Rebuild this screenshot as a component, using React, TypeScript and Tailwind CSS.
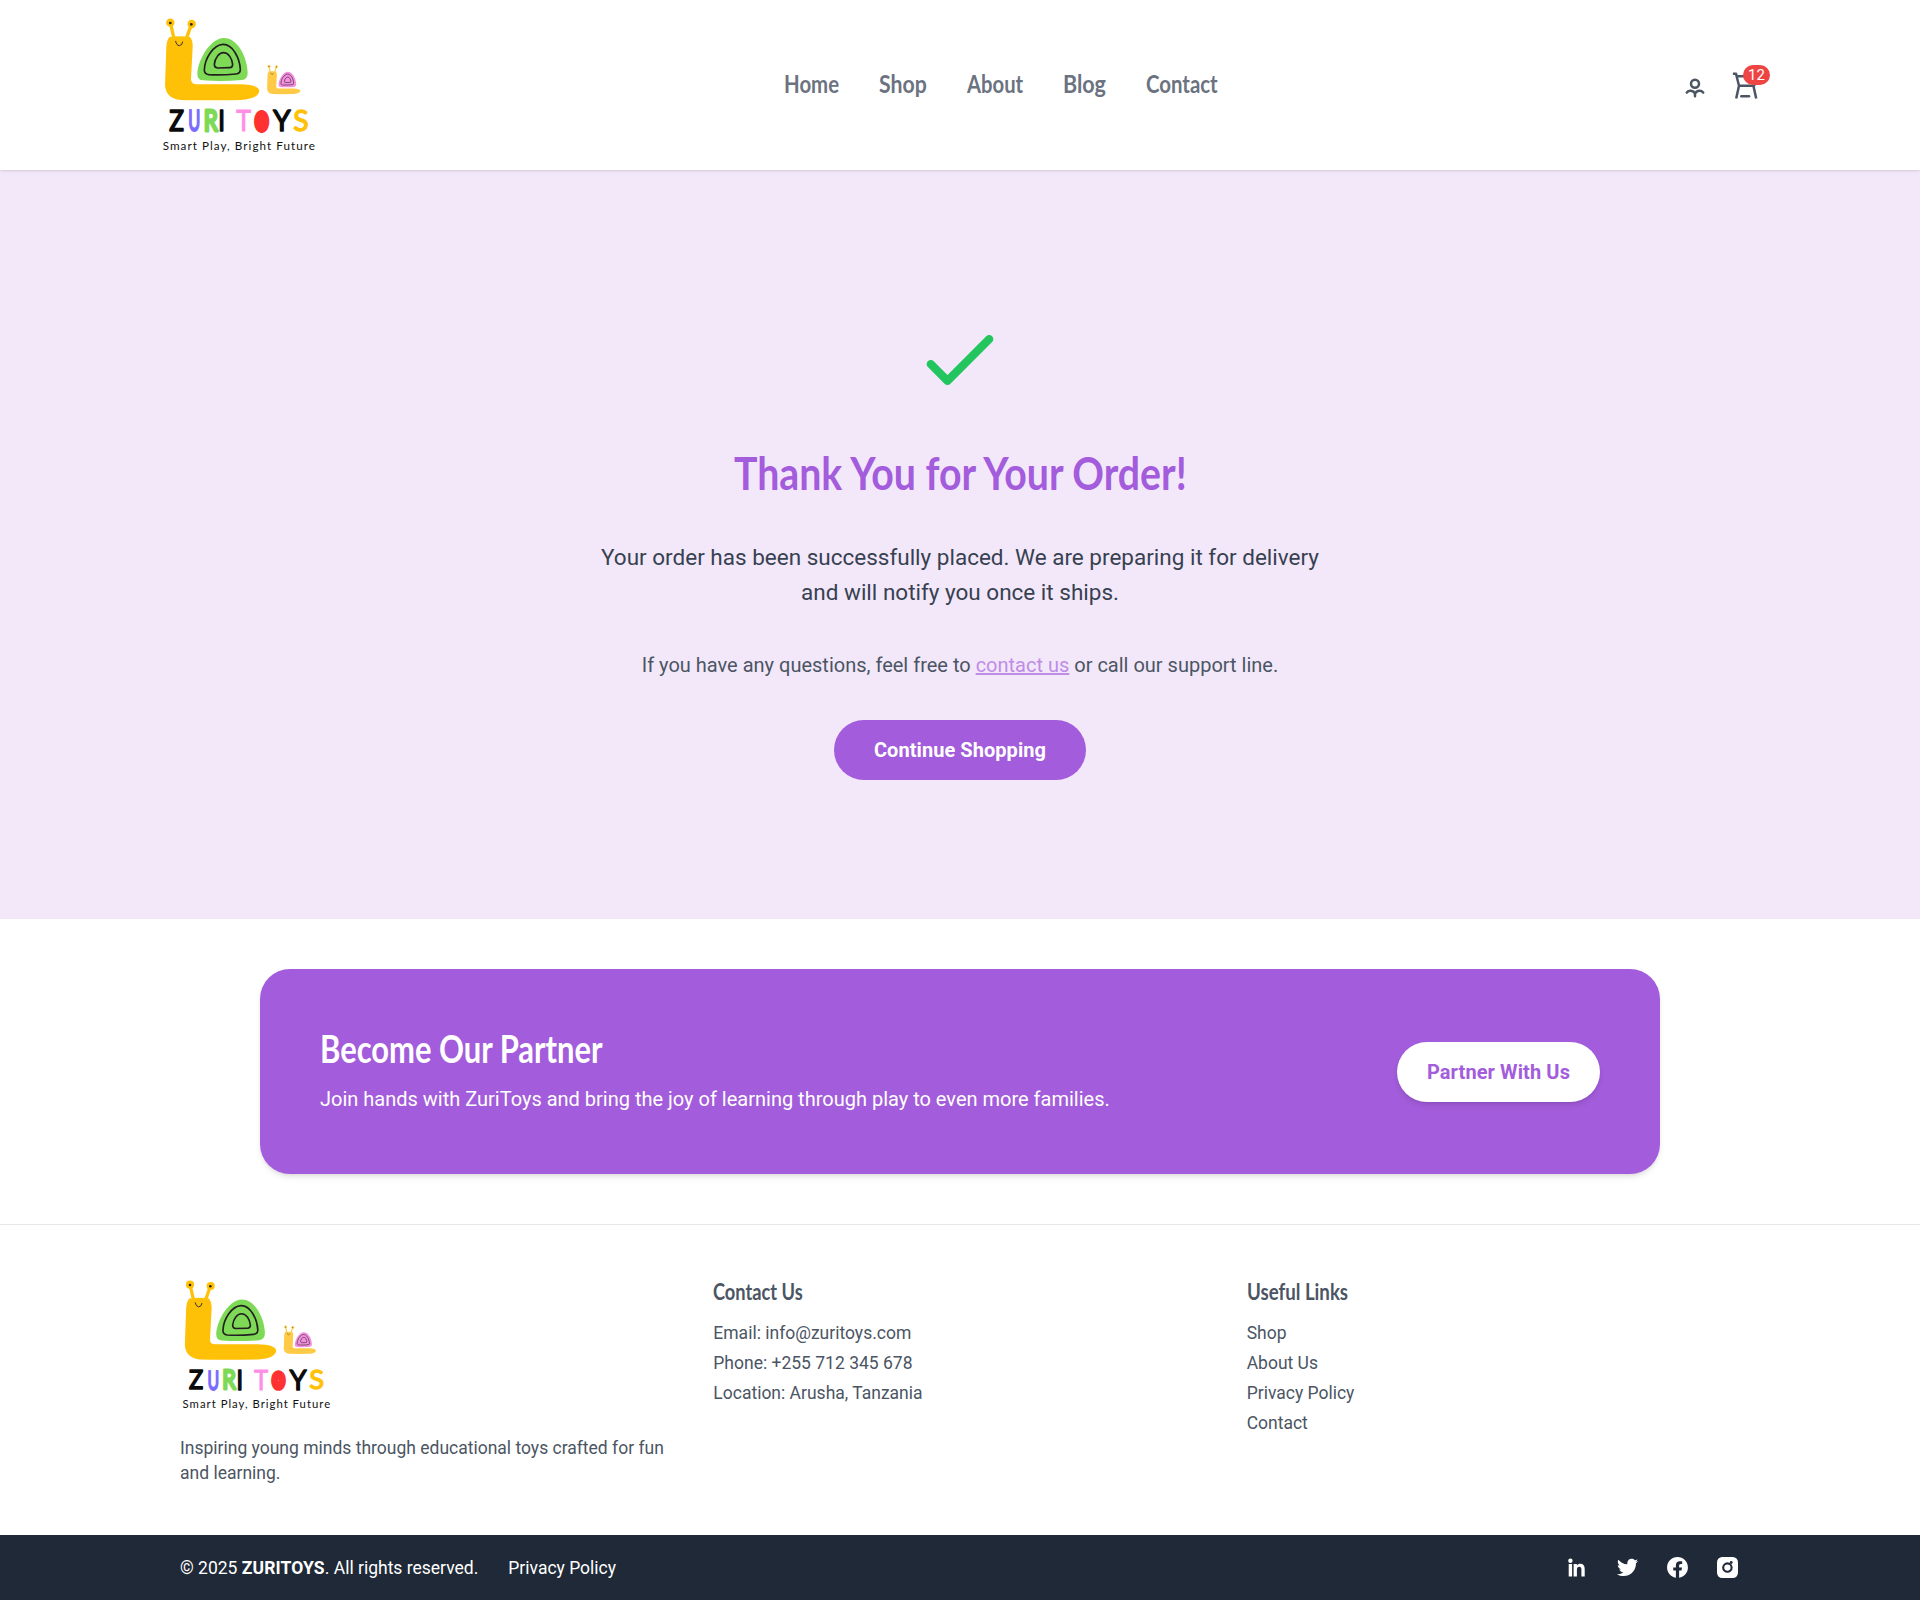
import type { ReactNode } from 'react';
import { RiFacebookCircleFill, RiTwitterFill } from 'react-icons/ri';

function Snail({ body, shell, line }: { body: string; shell: string; line: number }) {
  return (
    <g>
      <g fill="none" stroke={body} strokeWidth="10" strokeLinecap="round">
        <path d="M62 56L72 100" />
        <path d="M123 60L109 100" />
      </g>
      <circle cx="61" cy="52" r="12.5" fill={body} />
      <circle cx="125" cy="56" r="12.5" fill={body} />
      <path
        d="M58 95Q90 91 120 95Q129 106 128 125L123 222Q123 237 140 237L270 237Q326 238 328 257Q325 280 272 284Q160 286 92 284Q48 280 45 240L49 125Q50 106 58 95Z"
        fill={body}
      />
      <circle cx="61" cy="53" r="4" fill="#222" />
      <circle cx="124" cy="57" r="4" fill="#222" />
      <path d="M77 108Q79 120 88 121Q97 120 98 110" fill="none" stroke="#333" strokeWidth="3" strokeLinecap="round" />
      <path
        d="M221 98C262 97 292 155 293 202Q293 222 275 224Q215 229 160 225Q142 224 142 205C145 160 182 99 221 98Z"
        fill={shell}
      />
      <g fill="none" stroke="#231f20" strokeWidth={line} strokeLinejoin="round">
        <path d="M219 117C248 116 269 158 271 192Q271 205 258 206Q215 210 176 208Q163 206 163 194C164 160 190 118 219 117Z" />
        <path d="M220 142C236 142 246 160 248 177Q248 187 239 187L202 188Q193 187 193 177C195 157 208 142 220 142Z" />
      </g>
    </g>
  );
}

const letters = [
  { c: 'Z', x: 58, y: 376, w: 44, size: 84, fill: '#0a0a0a', s: 5 },
  { c: 'U', x: 115, y: 377, w: 36, size: 84, fill: '#7a6cff', s: 6 },
  { c: 'R', x: 161, y: 376, w: 42, size: 84, fill: '#7ed957', s: 9 },
  { c: 'I', x: 205, y: 377, w: 20, size: 86, fill: '#0a0a0a', s: 5 },
  { c: 'T', x: 259, y: 377, w: 44, size: 86, fill: '#ff8ee6', s: 3 },
  { c: 'O', x: 321, y: 367, w: 28, size: 50, fill: '#ff3131', s: 30 },
  { c: 'Y', x: 369, y: 377, w: 53, size: 86, fill: '#0a0a0a', s: 4 },
  { c: 'S', x: 430, y: 376, w: 46, size: 84, fill: '#ffc107', s: 4 },
];

function Logo({ className }: { className: string }) {
  return (
    <svg viewBox="30 23 480 435" className={className} role="img" aria-label="Zuri Toys">
      <Snail body="#ffc107" shell="#7ed957" line={5} />
      <g transform="translate(335.5 164.5) scale(.352 .358)">
        <Snail body="#ffca45" shell="#f58fe0" line={5} />
      </g>
      {letters.map((l) => (
        <text
          key={l.c}
          x={l.x}
          y={l.y}
          textLength={l.w}
          lengthAdjust="spacingAndGlyphs"
          fill={l.fill}
          stroke={l.fill}
          strokeWidth={l.s}
          strokeLinejoin="round"
          fontFamily="Lato, sans-serif"
          fontSize={l.size}
        >
          {l.c}
        </text>
      ))}
      <text x="38" y="434" textLength="457" lengthAdjust="spacing" fill="#111" fontFamily="Lato, sans-serif" fontSize="35">
        Smart Play, Bright Future
      </text>
    </svg>
  );
}

/* Condensed display lettering: the box has the set width, the glyphs are squeezed into it. */
function Squeezed({ box, squeeze, children }: { box: string; squeeze: string; children: ReactNode }) {
  return (
    <span className={`block whitespace-nowrap text-left ${box}`}>
      <span className={`inline-block origin-left ${squeeze}`}>{children}</span>
    </span>
  );
}

const nav = [
  { label: 'Home', box: 'w-[55px]', squeeze: 'scale-x-[0.815]' },
  { label: 'Shop', box: 'w-12', squeeze: 'scale-x-[0.85]' },
  { label: 'About', box: 'w-14', squeeze: 'scale-x-[0.81]' },
  { label: 'Blog', box: 'w-[43px]', squeeze: 'scale-x-[0.86]' },
  { label: 'Contact', box: 'w-[71px]', squeeze: 'scale-x-[0.815]' },
];

function Header() {
  return (
    <header className="relative z-10 bg-white shadow-sm">
      <div className="mx-auto flex h-[170px] w-[1600px] items-center justify-between">
        <Logo className="h-[145px] w-40" />
        <nav className="mb-[3px] flex gap-10 font-[Lato,sans-serif] text-[25px] leading-[35px] font-bold text-[#6b7280]">
          {nav.map((n) => (
            <a key={n.label} href="#">
              <Squeezed box={n.box} squeeze={n.squeeze}>{n.label}</Squeezed>
            </a>
          ))}
        </nav>
        <div className="flex gap-5 text-[#4b5563]">
          <svg className="size-[30px]" viewBox="0 0 30 30" fill="none" stroke="currentColor" strokeWidth="2.5" strokeLinecap="round" strokeLinejoin="round">
            <circle cx="15" cy="13.7" r="4" />
            <path d="M6.8 22.6C9 19.8 13.4 20.3 15 23.6C16.6 20.3 21 19.8 23.2 22.6M15 23.6V26.2" />
          </svg>
          <div className="relative">
            <svg className="size-[30px]" viewBox="0 0 30 30" fill="none" stroke="currentColor" strokeWidth="2.5" strokeLinejoin="round">
              <path d="M2.9 3.7H6L9 15.8H24.2L26.5 6.2H7M9 15.8L6.2 28.6M23.4 15.8L26.2 28.6" />
              <path d="M11.3 26.2H19" strokeLinecap="round" />
            </svg>
            <span className="absolute -top-[5px] left-[13px] flex h-5 w-[27px] items-center justify-center rounded-full bg-[#ef4444] text-[15px] text-white">12</span>
          </div>
        </div>
      </div>
    </header>
  );
}

function Hero() {
  return (
    <section className="flex h-[749px] flex-col items-center justify-center bg-[#f3e8fa] text-center">
      <svg className="mb-10 size-[100px] shrink-0 text-[#22c55e]" viewBox="0 0 24 24" fill="none" stroke="currentColor" strokeWidth="2" strokeLinecap="round" strokeLinejoin="round">
        <path d="M5 13l4 4L19 7" />
      </svg>
      <h1 className="relative -top-[2px] mb-10 font-[Lato,sans-serif] text-[45px] leading-[50px] font-bold text-[#a35cdb]">
        <Squeezed box="w-[453px]" squeeze="scale-x-[0.872]">Thank You for Your Order!</Squeezed>
      </h1>
      <p className="mb-10 w-[740px] text-[22.5px] leading-[35px] text-[#374151]">
        Your order has been successfully placed. We are preparing it for delivery and will notify you once it ships.
      </p>
      <p className="mb-10 text-xl leading-[30px] text-[#4b5563]">
        If you have any questions, feel free to <a href="#" className="text-[#bf8de6] underline">contact us</a> or call our support line.
      </p>
      <a href="#" className="rounded-full bg-[#a35cdb] px-10 py-[15px] text-xl leading-[30px] font-bold tracking-[0.06px] text-white">Continue Shopping</a>
    </section>
  );
}

function PartnerBanner() {
  return (
    <section className="py-[50px]">
      <div className="mx-auto flex w-[1400px] items-center justify-between rounded-[30px] bg-[#a35cdb] p-[60px] shadow-md">
        <div className="text-white">
          <h2 className="relative -top-[3px] mb-2.5 font-[Lato,sans-serif] text-[37.5px] leading-[45px] font-bold">
            <Squeezed box="w-[283px]" squeeze="scale-x-[0.825]">Become Our Partner</Squeezed>
          </h2>
          <p className="text-xl leading-[30px]">Join hands with ZuriToys and bring the joy of learning through play to even more families.</p>
        </div>
        <a href="#" className="rounded-full bg-white px-[30px] py-[15px] text-xl leading-[30px] font-bold tracking-[0.1px] text-[#a35cdb] shadow-md">Partner With Us</a>
      </div>
    </section>
  );
}

function FooterColumn({ title, squeeze, items }: { title: string; squeeze: string; items: string[] }) {
  return (
    <div>
      <h3 className="relative -top-px mb-[11px] font-[Lato,sans-serif] text-[22.5px] leading-[35px] font-bold">
        <Squeezed box="w-[110px]" squeeze={squeeze}>{title}</Squeezed>
      </h3>
      <ul className="space-y-[5px]">
        {items.map((i) => (
          <li key={i}>{i}</li>
        ))}
      </ul>
    </div>
  );
}

function LinkedinIcon() {
  return (
    <svg className="size-[25px]" viewBox="0 0 25 25" fill="currentColor">
      <circle cx="5.4" cy="5.7" r="2.2" />
      <path d="M3.7 9H7.1V21.4H3.7ZM8.6 9H11.9V10.5C12.6 9.4 13.8 8.8 15.3 8.8C18.4 8.8 19.7 10.8 19.7 14V21.4H16.4V14.6C16.4 12.8 15.8 11.8 14.3 11.8C12.7 11.8 11.9 12.9 11.9 14.8V21.4H8.6Z" />
    </svg>
  );
}

function InstagramIcon() {
  return (
    <svg className="size-[25px]" viewBox="0 0 25 25">
      <rect x="2" y="2" width="21" height="21" rx="5.2" fill="currentColor" />
      <circle cx="12.4" cy="12.6" r="4.2" fill="none" stroke="#1f2937" strokeWidth="2.1" />
      <circle cx="16.2" cy="7.5" r="1.4" fill="#1f2937" />
    </svg>
  );
}

function Footer() {
  return (
    <footer className="text-[17.5px] leading-[25px]">
      <div className="border-t border-[#e5e7eb] pt-[50px] pb-[49px] text-[#4b5563]">
        <div className="mx-auto grid w-[1560px] grid-cols-3 gap-10">
          <div>
            <Logo className="mb-5 h-[141px] w-[155px]" />
            <p>Inspiring young minds through educational toys crafted for fun and learning.</p>
          </div>
          <FooterColumn title="Contact Us" squeeze="scale-x-[0.81]" items={['Email: info@zuritoys.com', 'Phone: +255 712 345 678', 'Location: Arusha, Tanzania']} />
          <FooterColumn title="Useful Links" squeeze="scale-x-[0.83]" items={['Shop', 'About Us', 'Privacy Policy', 'Contact']} />
        </div>
      </div>
      <div className="bg-[#1f2937] py-5 text-white">
        <div className="mx-auto flex h-[25px] w-[1560px] items-center justify-between">
          <div className="flex gap-[30px] pt-0.5">
            <span>© 2025 <strong className="tracking-[0.12px]">ZURITOYS</strong>. All rights reserved.</span>
            <a href="#">Privacy Policy</a>
          </div>
          <div className="flex gap-[25px] text-[25px]">
            <LinkedinIcon />
            <RiTwitterFill />
            <RiFacebookCircleFill />
            <InstagramIcon />
          </div>
        </div>
      </div>
    </footer>
  );
}

export default function App() {
  return (
    <div className="min-h-screen bg-white font-[Roboto,sans-serif]">
      <Header />
      <Hero />
      <PartnerBanner />
      <Footer />
    </div>
  );
}
